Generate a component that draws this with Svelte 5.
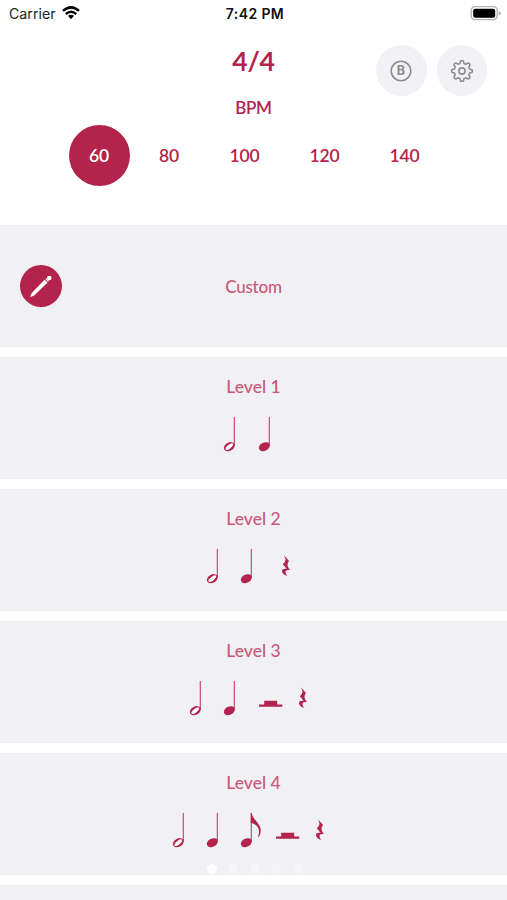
<script lang="ts">
    type Level = {
        name: string;
        symbols: string[];
    };

    const tempos = [60, 80, 100, 120, 140];
    const levels: Level[] = [
        { name: "Level 1", symbols: ["half", "quarter"] },
        { name: "Level 2", symbols: ["half", "quarter", "quarter-rest"] },
        { name: "Level 3", symbols: ["half", "quarter", "half-rest", "quarter-rest"] },
        { name: "Level 4", symbols: ["half", "quarter", "eighth", "half-rest", "quarter-rest"] },
    ];

    let bpm = $state(60);
    let page = $state(0);

    // outline of the settings gear, a wavy ring with eight teeth
    function gearPath(): string {
        const pts: string[] = [];
        for (let i = 0; i < 120; i++) {
            const a = (i * 3 * Math.PI) / 180;
            const r = 9 + 1.35 * Math.tanh(2 * Math.cos(8 * a));
            pts.push(`${(12 + r * Math.sin(a)).toFixed(2)} ${(12 - r * Math.cos(a)).toFixed(2)}`);
        }
        return `M${pts.join("L")}Z`;
    }
</script>

<div class="screen">
    <div class="status">
        <div class="carrier">
            <span>Carrier</span>
            <svg width="18" height="14" viewBox="0 0 18 14">
                <path d="M1 4.9Q9-2.1 17 4.9" stroke-width="2.5" />
                <path d="M3.8 8Q9 3.6 14.2 8" stroke-width="2.3" />
                <path d="M6 9.8Q9 7.6 12 9.8L9 13.2Z" class="solid" />
            </svg>
        </div>
        <div class="time">7:42 PM</div>
        <div class="power">
            <svg width="31" height="16" viewBox="0 0 31 16">
                <rect x="1.2" y="1.6" width="26" height="13" rx="3.8" fill="#fff" stroke="#b5b5b3" stroke-width="1.4" />
                <rect x="3.2" y="3.7" width="22" height="9" rx="2" fill="#000" />
                <path d="M28.7 5.9Q30.7 6.8 30.7 8.2T28.7 10.4Z" fill="#aaa" />
            </svg>
        </div>
    </div>

    <header>
        <div class="signature">4/4</div>
        <div class="label">BPM</div>
        <div class="tempos">
            {#each tempos as tempo}
                <button class="tempo" class:active={tempo === bpm} onclick={() => (bpm = tempo)}>{tempo}</button>
            {/each}
        </div>
        <div class="actions">
            <button class="round" aria-label="Sound bank">
                <svg width="24" height="24" viewBox="0 0 24 24">
                    <circle cx="12" cy="12" r="9.8" />
                    <text x="12" y="16.4" text-anchor="middle">B</text>
                </svg>
            </button>
            <button class="round" aria-label="Settings">
                <svg width="24" height="24" viewBox="0 0 24 24">
                    <path d={gearPath()} />
                    <circle cx="12" cy="12" r="3.1" />
                </svg>
            </button>
        </div>
    </header>

    <main>
        <section class="custom">
            <span class="edit">
                <svg width="42" height="42" viewBox="0 0 42 42">
                    <path d="M10.6 31.6L12 28L24.6 15L27.3 17.5L14.2 30.2Z" stroke="#fff" stroke-width="0.6" stroke-linejoin="round" />
                    <path d="M25.4 14.1L26.5 13.2L28.9 15.7L28 16.7Z" />
                    <circle cx="29.3" cy="13" r="2.3" />
                </svg>
            </span>
            <span class="name">Custom</span>
        </section>

        {#each levels as level}
            <section class="level">
                <div class="name">{level.name}</div>
                <div class="symbols">
                    {#each level.symbols as symbol}
                        <svg class="symbol" viewBox="0 0 34.3 40">
                            {#if symbol === "half-rest"}
                                <path d="M5 25.6H10.2V21.8H23.2V25.6H28.3V27.8H5Z" />
                            {:else if symbol === "quarter-rest"}
                                <path d="M13 8.2L18 14Q15.9 16.6 16.5 18.4Q17 20.3 18.9 23.1Q14.5 22.4 14.5 25Q14.6 27.1 16.2 28.9Q10.9 27 11 24Q11.3 21.2 15.6 21.8L11.8 17.3Q14.5 15.2 14.5 12.7Q14.4 11 13 8.2Z" />
                            {:else}
                                <rect x="14.7" y="2" width="1.3" height="29" class="stem" />
                                {#if symbol === "half"}
                                    <ellipse cx="10.3" cy="31.7" rx="5.8" ry="4.1" transform="rotate(-30 10.3 31.7)" />
                                    <ellipse cx="10.3" cy="31.7" rx="4.6" ry="1.9" transform="rotate(-38 10.3 31.7)" class="hole" />
                                {:else}
                                    <ellipse cx="10.3" cy="31.7" rx="5.8" ry="4.1" transform="rotate(-27 10.3 31.7)" />
                                {/if}
                                {#if symbol === "eighth"}
                                    <path d="M14.8 2H15.7C16.2 8 24.8 12.5 24.8 19.5Q24.7 23.5 22.8 26.3L22 26Q23.3 22.5 23 19.5C22.6 14.9 18.5 12.9 15.7 12H14.8Z" />
                                {/if}
                            {/if}
                        </svg>
                    {/each}
                </div>
            </section>
        {/each}
        <section class="level"></section>
    </main>

    <div class="dots">
        {#each [0, 1, 2, 3, 4] as i}
            <button class="dot" class:current={i === page} aria-label={`Page ${i + 1}`} onclick={() => (page = i)}></button>
        {/each}
    </div>
</div>

<style>
    :global(body) {
        margin: 0;
        overflow: hidden;
    }
    .screen {
        position: relative;
        width: 507px;
        height: 900px;
        overflow: hidden;
        background: #fff;
        color: #b3234b;
        font-family: Lato, sans-serif;
    }
    button {
        border: 0;
        padding: 0;
        background: none;
        font: inherit;
        color: inherit;
    }
    svg {
        display: block;
    }
    .status {
        display: grid;
        grid-template-columns: 1fr auto 1fr;
        align-items: center;
        height: 28px;
        box-sizing: border-box;
        padding: 0 6px 1px 9px;
        font-family: Inter, sans-serif;
        font-size: 14.2px;
        color: #222;
    }
    .carrier {
        display: flex;
        align-items: center;
        gap: 6px;
    }
    .carrier svg {
        fill: none;
        stroke: #000;
        margin-top: -1px;
    }
    .carrier .solid {
        fill: #000;
        stroke: none;
    }
    .time {
        font-weight: 600;
        font-size: 14px;
        letter-spacing: 0.4px;
        color: #111;
    }
    .power {
        justify-self: end;
        margin-top: -1px;
    }
    header {
        position: relative;
        height: 197px;
        text-align: center;
        font-weight: 600;
    }
    .signature {
        padding-top: 15px;
        font-size: 26.5px;
        line-height: 36px;
        font-weight: 700;
        letter-spacing: -0.2px;
    }
    .label {
        padding-top: 18px;
        font-size: 17px;
        line-height: 22px;
        letter-spacing: -0.3px;
    }
    .tempos {
        display: flex;
        align-items: center;
        padding: 6px 0 0 69px;
    }
    .tempo {
        width: 80px;
        height: 61px;
        padding-right: 1px;
        font-size: 17.5px;
        letter-spacing: -0.1px;
    }
    .tempo.active {
        width: 61px;
        margin-right: 9px;
        border-radius: 50%;
        background: #b3234b;
        color: #fff;
    }
    .tempo:nth-child(2) {
        width: 61px;
        margin-right: 5px;
    }
    /* buttons float over the right side of the header */
    .actions {
        position: absolute;
        top: 17px;
        right: 20px;
        display: flex;
        gap: 10px;
    }
    .round {
        display: flex;
        align-items: center;
        justify-content: center;
        width: 50.5px;
        height: 51px;
        border-radius: 50%;
        background: #f2f1f6;
    }
    .round svg {
        fill: none;
        stroke: #8c8b91;
        stroke-width: 1.6;
        stroke-linejoin: round;
    }
    .round text {
        fill: #8c8b91;
        stroke: none;
        font: 700 12.5px Inter, sans-serif;
    }
    main {
        display: flex;
        flex-direction: column;
        gap: 10px;
    }
    section {
        height: 122px;
        flex: none;
        background: #f1f0f5;
    }
    .name {
        font-size: 17.5px;
        line-height: 24px;
        font-weight: 500;
        color: #c9587a;
    }
    .custom {
        display: grid;
        grid-template-columns: 62px 1fr 62px;
        align-items: center;
        text-align: center;
    }
    .custom .name {
        padding-top: 2px;
        font-size: 17px;
        letter-spacing: -0.2px;
    }
    .edit {
        justify-self: end;
        width: 42px;
        height: 42px;
        border-radius: 50%;
        background: #b3234b;
    }
    .edit svg {
        fill: #fff;
    }
    .level {
        box-sizing: border-box;
        padding-top: 18px;
        text-align: center;
    }
    .symbols {
        display: flex;
        justify-content: center;
        padding-top: 16px;
    }
    .symbol {
        width: 34.3px;
        height: 40px;
        fill: #b3234b;
    }
    .symbol .stem {
        fill: #c65b7b;
    }
    .symbol .hole {
        fill: #fff;
    }
    /* page indicator sits on top of the list */
    .dots {
        position: absolute;
        left: 2px;
        right: 0;
        bottom: 26px;
        display: flex;
        justify-content: center;
        gap: 11.5px;
    }
    .dot {
        width: 10px;
        height: 10px;
        border-radius: 50%;
        background: #fff;
        opacity: 0.35;
    }
    .dot.current {
        opacity: 1;
    }
</style>
